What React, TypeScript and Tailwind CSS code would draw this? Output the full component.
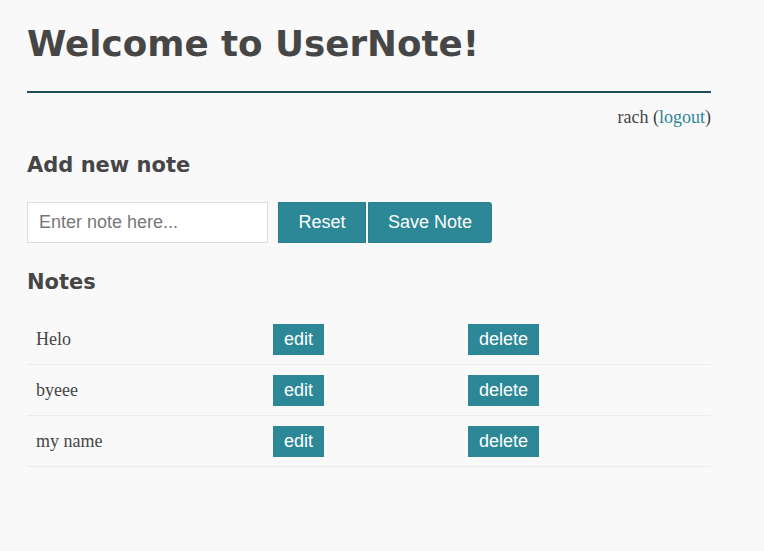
import { useState } from "react";

const notes = ["Helo", "byeee", "my name"];

export default function App() {
  const [text, setText] = useState("");

  return (
    <div className="min-h-[551px] bg-[#f9f9f9] text-[#464646]">
      <div className="w-[684px] ml-[27px] pt-[22px]">
        {/* Header */}
        <h1 className="font-['DejaVu_Sans',Verdana,sans-serif] font-bold text-[35.7px] leading-[44px] pb-[25px] border-b-2 border-[#1e4f56]">
          Welcome to UserNote!
        </h1>
        <div className="text-right font-['Liberation_Serif',serif] text-[18px] leading-[20px] mt-[14px]">
          rach (<a href="#" className="text-[#2b8797]">logout</a>)
        </div>

        {/* Add note */}
        <h2 className="font-['DejaVu_Sans',Verdana,sans-serif] font-bold text-[21px] leading-[26px] mt-[25px]">
          Add new note
        </h2>
        <div className="flex items-center mt-[24px]">
          <input
            value={text}
            onChange={(e) => setText(e.target.value)}
            placeholder="Enter note here..."
            className="w-[241px] h-[41px] bg-white border border-[#dcdcdc] px-[11px] font-['Liberation_Sans',Arial,sans-serif] text-[18px] text-[#444] placeholder:text-[#777] outline-none"
          />
          <button className="ml-[10px] w-[88px] h-[41px] bg-[#2c8797] text-white font-['Liberation_Sans',Arial,sans-serif] text-[18px] border border-[#2a7f8d]">
            Reset
          </button>
          <button className="ml-[2px] w-[124px] h-[41px] bg-[#2c8797] text-white font-['Liberation_Sans',Arial,sans-serif] text-[18px] rounded-r-[3px] border border-[#2a7f8d]">
            Save Note
          </button>
        </div>

        {/* Notes list */}
        <h2 className="font-['DejaVu_Sans',Verdana,sans-serif] font-bold text-[21px] leading-[26px] mt-[26px]">
          Notes
        </h2>
        <div className="mt-[19px]">
          {notes.map((n) => (
            <div
              key={n}
              className="grid grid-cols-[237px_195px_1fr] items-center h-[51px] border-b border-[#ececec]"
            >
              <div className="pl-[9px] font-['Liberation_Serif',serif] text-[18px]">{n}</div>
              <div className="pl-[9px]">
                <button className="w-[51px] h-[31px] bg-[#2c8797] text-white font-['Liberation_Sans',Arial,sans-serif] text-[18px]">
                  edit
                </button>
              </div>
              <div className="pl-[9px]">
                <button className="w-[71px] h-[31px] bg-[#2c8797] text-white font-['Liberation_Sans',Arial,sans-serif] text-[18px]">
                  delete
                </button>
              </div>
            </div>
          ))}
        </div>
      </div>
    </div>
  );
}
